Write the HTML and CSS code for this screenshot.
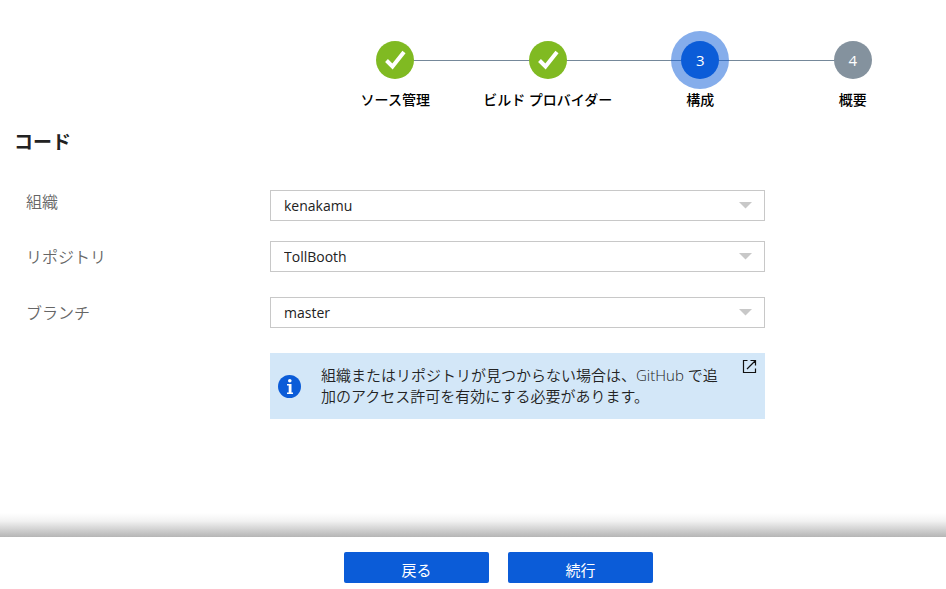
FILE: index.html
```html
<!DOCTYPE html>
<html lang="ja">
<head>
  <meta charset="utf-8">
  <meta name="viewport" content="width=device-width, initial-scale=1">
  <title>構成</title>
  <link rel="stylesheet" href="styles.css">
</head>
<body>
  <ol class="steps">
    <li class="step step--done">
      <span class="step__mark"><svg width="22" height="20" viewBox="0 0 22 20" aria-hidden="true"><path d="M2.500 10.500l6 6L20 2" /></svg></span>
      <span class="step__label">ソース管理</span>
    </li>
    <li class="step step--done">
      <span class="step__mark"><svg width="22" height="20" viewBox="0 0 22 20" aria-hidden="true"><path d="M2.500 10.500l6 6L20 2" /></svg></span>
      <span class="step__label">ビルド プロバイダー</span>
    </li>
    <li class="step step--current" aria-current="step">
      <span class="step__mark">3</span>
      <span class="step__label">構成</span>
    </li>
    <li class="step">
      <span class="step__mark">4</span>
      <span class="step__label">概要</span>
    </li>
  </ol>

  <main class="content">
    <h1 class="title">コード</h1>
    <form id="code-form" class="form">
      <div class="field field--tight">
        <label class="field__label" for="org">組織</label>
        <div class="picker">
          <select class="picker__select" id="org"><option>kenakamu</option></select>
          <svg class="picker__arrow" width="13" height="7" viewBox="0 0 13 7" aria-hidden="true"><path d="M0 0h13L6.500 6.500z" /></svg>
        </div>
      </div>
      <div class="field">
        <label class="field__label" for="repo">リポジトリ</label>
        <div class="picker">
          <select class="picker__select" id="repo"><option>TollBooth</option></select>
          <svg class="picker__arrow" width="13" height="7" viewBox="0 0 13 7" aria-hidden="true"><path d="M0 0h13L6.500 6.500z" /></svg>
        </div>
      </div>
      <div class="field">
        <label class="field__label" for="branch">ブランチ</label>
        <div class="picker">
          <select class="picker__select" id="branch"><option>master</option></select>
          <svg class="picker__arrow" width="13" height="7" viewBox="0 0 13 7" aria-hidden="true"><path d="M0 0h13L6.500 6.500z" /></svg>
        </div>
      </div>
      <div class="field">
        <a class="notice" href="#">
          <svg class="notice__icon" width="23" height="23" viewBox="0 0 23 23" aria-hidden="true">
            <circle cx="11.500" cy="11.500" r="11.500" fill="#0b5cd8" />
            <circle cx="11.800" cy="5.800" r="1.800" fill="#fff" />
            <path d="M9 9h4.500v8.500h1.500V19H9v-1.500h1.700v-7H9z" fill="#fff" />
          </svg>
          <span class="notice__text">組織またはリポジトリが見つからない場合は、GitHub で追加のアクセス許可を有効にする必要があります。</span>
          <svg class="notice__open" width="15" height="15" viewBox="0 0 15 15" aria-hidden="true">
            <path d="M5.500 1.500H1.500v12H13.500V9.500M8.500 1.500h5V6.500M13.500 1.500L5 10" />
          </svg>
        </a>
      </div>
    </form>
  </main>

  <footer class="footer">
    <button class="button" type="button">戻る</button>
    <button class="button" type="submit" form="code-form">続行</button>
  </footer>
</body>
</html>
```

FILE: styles.css
```css
* {
  box-sizing: border-box;
}

body {
  display: flex;
  flex-direction: column;
  min-height: 100vh;
  margin: 0;
  background: #fff;
  color: #222;
  font-family: "Open Sans", "Noto Sans CJK JP", sans-serif;
  font-size: 15px;
}

/* Progress steps */
.steps {
  display: grid;
  grid-template-columns: repeat(4, 1fr);
  width: 100%;
  max-width: 610px;
  margin: 41px 17px 18px auto;
  padding: 0;
  list-style: none;
}

.step {
  position: relative;
  display: flex;
  flex-direction: column;
  align-items: center;
  gap: 11px;
}

.step:not(:last-child)::after {
  content: "";
  position: absolute;
  z-index: -1;
  top: 19px;
  left: 50%;
  width: 100%;
  height: 1px;
  background: #75889a;
}

.step__mark {
  display: flex;
  align-items: center;
  justify-content: center;
  width: 38px;
  height: 38px;
  border-radius: 50%;
  background: #84929e;
  color: #fff;
  line-height: 20px;
  padding-bottom: 1px;
}

.step__mark path {
  fill: none;
  stroke: #fff;
  stroke-width: 4;
}

.step--done .step__mark {
  background: #80ba22;
}

.step--current .step__mark {
  background: #0b5cd8;
  box-shadow: 0 0 0 10px rgba(11, 92, 216, 0.5);
}

.step__label {
  color: #000;
  font-size: 14px;
  font-weight: 500;
  line-height: 20px;
  white-space: nowrap;
}

/* Form */
.content {
  flex: 1;
  padding: 0 14px;
}

.title {
  margin: 0 0 34px;
  font-size: 19px;
  font-weight: 700;
  line-height: 28px;
}

.form {
  padding-left: 12px;
}

.field {
  display: grid;
  grid-template-columns: 244px minmax(0, 495px);
  align-items: center;
  margin-bottom: 25px;
}

.field--tight {
  align-items: start;
  margin-bottom: 20px;
}

.field__label {
  color: #666;
  font-size: 16px;
  font-weight: 350;
  line-height: 24px;
}

.picker {
  position: relative;
}

.picker__select {
  display: block;
  width: 100%;
  height: 31px;
  padding: 0 32px 0 13px;
  border: 1px solid #c8c8c8;
  border-radius: 0;
  background: #fff;
  color: #222;
  font: inherit;
  font-size: 14px;
  appearance: none;
}

.picker__arrow {
  position: absolute;
  top: 12px;
  right: 13px;
  fill: #c8c8c8;
  pointer-events: none;
}

.notice {
  grid-column: 2;
  display: flex;
  align-items: center;
  min-height: 66px;
  padding: 6px 8px;
  background: #d3e7f8;
  color: #222;
  text-decoration: none;
}

.notice__icon {
  flex: none;
}

.notice__text {
  flex: 1;
  margin: 0 24px 0 20px;
  font-weight: 350;
  line-height: 21px;
}

.notice__open {
  flex: none;
  align-self: flex-start;
  fill: none;
  stroke: #111;
  stroke-width: 1.2;
}

/* Footer */
.footer {
  position: relative;
  display: flex;
  justify-content: center;
  gap: 19px;
  padding: 15px 0 6px 51px;
}

.footer::before {
  content: "";
  position: absolute;
  right: 0;
  bottom: 100%;
  left: 0;
  height: 24px;
  background: linear-gradient(#fff, #f2f2f2 33%, #b5b5b5);
}

.button {
  width: 145px;
  height: 31px;
  padding: 5px 0 0;
  border: 0;
  border-radius: 2px;
  background: #0b5cd8;
  color: #fff;
  font: inherit;
  line-height: 22px;
}
```
